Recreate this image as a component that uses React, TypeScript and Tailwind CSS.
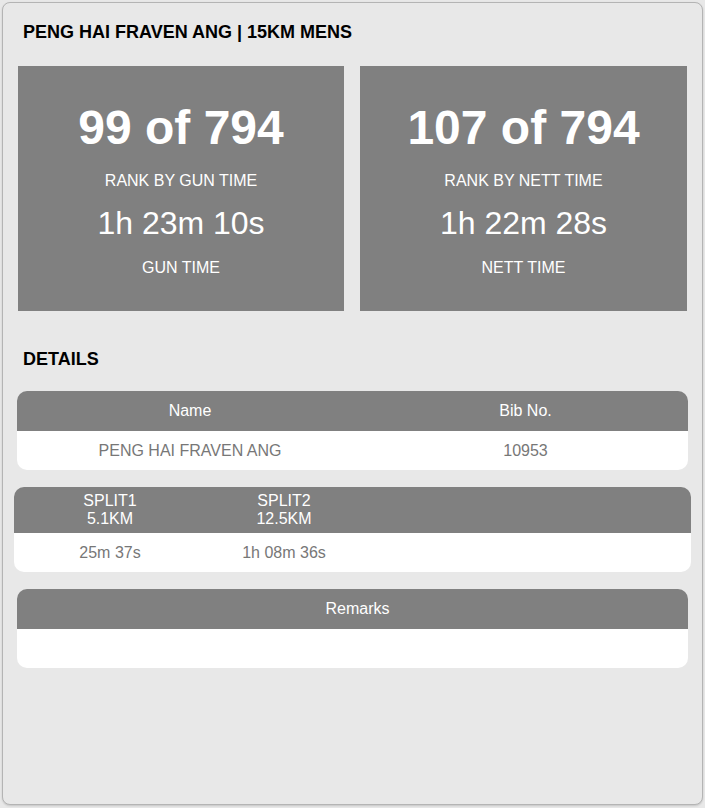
import React from "react";

const font = { fontFamily: '"Liberation Sans", Arial, sans-serif' };

function StatBox({ rank, rankLabel, time, timeLabel }: { rank: string; rankLabel: string; time: string; timeLabel: string }) {
  return (
    <div className="bg-[#808080] h-[245px] flex flex-col items-center text-white">
      <div className="mt-[34px] text-[48px] font-bold leading-[56px]">{rank}</div>
      <div className="mt-[16px] text-[16px] leading-[18px]">{rankLabel}</div>
      <div className="mt-[15px] text-[32px] leading-[37px]">{time}</div>
      <div className="mt-[17px] text-[16px] leading-[18px]">{timeLabel}</div>
    </div>
  );
}

export default function App() {
  return (
    <div style={font} className="w-[705px] h-[808px] bg-[#e8e8e8] p-[2px]">
      <div className="h-[803px] w-[701px] rounded-[8px] border border-[#b4b4b4] bg-[#e8e8e8] shadow-[0_1px_2px_rgba(0,0,0,0.15)] flex flex-col">
        <div className="pl-[20px] pt-[19px] text-[18px] font-bold leading-[20px] text-black">
          PENG HAI FRAVEN ANG | 15KM MENS
        </div>
        <div className="mt-[24px] ml-[15px] w-[669px] grid grid-cols-[326px_327px] gap-[16px]">
          <StatBox rank="99 of 794" rankLabel="RANK BY GUN TIME" time="1h 23m 10s" timeLabel="GUN TIME" />
          <StatBox rank="107 of 794" rankLabel="RANK BY NETT TIME" time="1h 22m 28s" timeLabel="NETT TIME" />
        </div>
        <div className="pl-[20px] mt-[38px] text-[18px] font-bold leading-[20px] text-black">DETAILS</div>

        <div className="mt-[22px] ml-[14px] w-[671px] rounded-[10px] overflow-hidden">
          <div className="grid grid-cols-[346px_1fr] bg-[#808080] text-white text-[16px] h-[40px] items-center text-center">
            <div>Name</div>
            <div>Bib No.</div>
          </div>
          <div className="grid grid-cols-[346px_1fr] bg-white text-[#777777] text-[16px] h-[39px] items-center text-center">
            <div>PENG HAI FRAVEN ANG</div>
            <div>10953</div>
          </div>
        </div>

        <div className="mt-[17px] ml-[11px] w-[677px] rounded-[10px] overflow-hidden">
          <div className="grid grid-cols-[192px_156px_1fr] bg-[#808080] text-white text-[16px] leading-[18px] h-[46px] items-center text-center">
            <div>SPLIT1<br />5.1KM</div>
            <div>SPLIT2<br />12.5KM</div>
            <div></div>
          </div>
          <div className="grid grid-cols-[192px_156px_1fr] bg-white text-[#777777] text-[16px] h-[39px] items-center text-center">
            <div>25m 37s</div>
            <div>1h 08m 36s</div>
            <div></div>
          </div>
        </div>

        <div className="mt-[17px] ml-[14px] w-[671px] rounded-[10px] overflow-hidden">
          <div className="bg-[#808080] text-white text-[16px] h-[40px] flex items-center justify-center pl-[10px]">Remarks</div>
          <div className="bg-white h-[39px]"></div>
        </div>
      </div>
    </div>
  );
}
